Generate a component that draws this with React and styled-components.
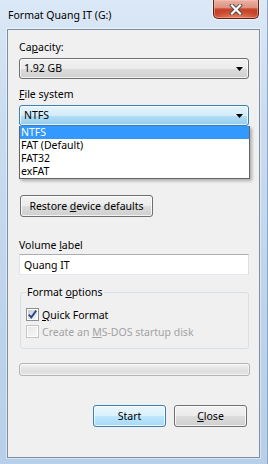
import React from "react";
import styled, { createGlobalStyle } from "styled-components";

const FONT = `"Noto Sans", "Segoe UI", sans-serif`;

const Global = createGlobalStyle`
  html, body { margin: 0; padding: 0; background: #ffffff; }
  #root { width: 268px; height: 464px; }
  u { text-decoration: underline; text-underline-offset: 1px; }
`;

const Window = styled.div`
  width: 268px;
  height: 464px;
  box-sizing: border-box;
  display: flex;
  flex-direction: column;
  overflow: hidden;
  font-family: ${FONT};
  font-size: 10.5px;
  color: #000;
  background: linear-gradient(to bottom, #dbe8f6 0%, #cadcf0 25%, #bdd3eb 70%, #b7cfe8 100%);
  box-shadow: inset -1px 0 0 #8ea6c2;
`;

const TitleBar = styled.div`
  flex: none;
  height: 29px;
  display: flex;
  align-items: flex-start;
  padding-left: 8px;
`;

const Title = styled.div`
  margin-top: 8px;
  line-height: 14px;
  white-space: nowrap;
`;

const CloseBtn = styled.div`
  margin-left: auto;
  margin-right: 9px;
  width: 46px;
  height: 19px;
  box-sizing: border-box;
  border: 1px solid #5b2117;
  border-top: none;
  border-radius: 0 0 5px 5px;
  display: flex;
  align-items: center;
  justify-content: center;
  background:
    radial-gradient(ellipse 60% 45% at 50% 100%, rgba(240, 140, 100, 0.85), rgba(240, 140, 100, 0) 100%),
    linear-gradient(to bottom, #ebb1a3 0%, #df9280 42%, #c8472e 50%, #c13e25 75%, #c84a30 100%);
  box-shadow: 0 0 0 1px rgba(255, 255, 255, 0.5), inset 0 0 0 1px rgba(255, 200, 190, 0.45);
`;

const Client = styled.div`
  flex: none;
  margin: 0 8px 0 7px;
  height: 429px;
  box-sizing: border-box;
  border: 1px solid #7d8ea3;
  background: #f0f0f0;
  padding: 10px 10px 0 11px;
  display: flex;
  flex-direction: column;
  box-shadow: 0 0 0 1px rgba(255, 255, 255, 0.45);
`;

const Label = styled.div`
  height: 14px;
  line-height: 14px;
  white-space: nowrap;
  margin-top: ${(p) => p.$mt || 0}px;
  margin-bottom: ${(p) => (p.$mb === undefined ? 4 : p.$mb)}px;
`;

const Spacer = styled.div`
  flex: none;
  height: ${(p) => p.$h}px;
`;

const ComboWrap = styled.div`
  position: relative;
  z-index: ${(p) => (p.$open ? 5 : 1)};
`;

const Combo = styled.div`
  height: 21px;
  box-sizing: border-box;
  border: 1px solid ${(p) => (p.$open ? "#3c7fb1" : "#707070")};
  border-radius: 3px;
  padding-left: 4px;
  display: flex;
  align-items: center;
  line-height: 19px;
  white-space: nowrap;
  background: ${(p) =>
    p.$open
      ? "linear-gradient(to bottom, #e6f4fc 0%, #d2ecfa 50%, #b5def5 50%, #93ccec 100%)"
      : "linear-gradient(to bottom, #f2f2f2 0%, #ebebeb 50%, #dddddd 50%, #cfcfcf 100%)"};
  box-shadow: inset 0 0 0 1px rgba(255, 255, 255, 0.7);
`;

const Arrow = styled.svg`
  margin-left: auto;
  margin-right: 5px;
  flex: none;
`;

const List = styled.ul`
  position: absolute;
  top: 100%;
  left: 0;
  right: -1px;
  margin: 0;
  padding: 0;
  list-style: none;
  background: #ffffff;
  border: 1px solid #646464;
  border-top: none;
  box-shadow: 2px 2px 3px rgba(0, 0, 0, 0.28);
`;

const Item = styled.li`
  height: 13px;
  line-height: 13px;
  padding-left: 1px;
  white-space: nowrap;
  background: ${(p) => (p.$sel ? "#3399ff" : "transparent")};
  color: ${(p) => (p.$sel ? "#ffffff" : "#000000")};
`;

const Button = styled.button`
  flex: none;
  font: inherit;
  color: #000;
  width: ${(p) => p.$w}px;
  height: 22px;
  box-sizing: border-box;
  padding: 0;
  margin: ${(p) => p.$m || "0"};
  line-height: 18px;
  white-space: nowrap;
  border-radius: 3px;
  border: 1px solid ${(p) => (p.$default ? "#3c7fb1" : "#707070")};
  background: ${(p) =>
    p.$default
      ? "linear-gradient(to bottom, #eaf6fd 0%, #d9f0fc 50%, #bee6fd 50%, #a7d9f5 100%)"
      : "linear-gradient(to bottom, #f2f2f2 0%, #ebebeb 50%, #dddddd 50%, #cfcfcf 100%)"};
  box-shadow: inset 0 0 0 1px rgba(255, 255, 255, 0.75);
  cursor: default;
`;

const TextInput = styled.input`
  font: inherit;
  color: #000;
  height: 21px;
  box-sizing: border-box;
  width: 100%;
  margin: 0;
  padding: 0 0 0 4px;
  background: #ffffff;
  border: 1px solid;
  border-color: #abadb3 #dbdfe6 #e3e9ef #e2e3ea;
  border-radius: 0;
  outline: none;
`;

const Group = styled.fieldset`
  margin: 10px 0 0 1px;
  width: 229px;
  box-sizing: border-box;
  min-inline-size: 0;
  padding: 8px 5px 9px 5px;
  border: 1px solid #d5dfe5;
  border-radius: 3px;
`;

const Legend = styled.legend`
  padding: 0 1px;
  line-height: 14px;
  height: 14px;
  white-space: nowrap;
`;

const CheckRow = styled.div`
  height: 15px;
  display: flex;
  align-items: center;
  gap: 3px;
  white-space: nowrap;
  margin-top: ${(p) => p.$mt || 0}px;
  color: ${(p) => (p.$disabled ? "#a3a3a3" : "#000")};
`;

const Box = styled.span`
  flex: none;
  width: 13px;
  height: 13px;
  box-sizing: border-box;
  border: 1px solid ${(p) => (p.$disabled ? "#c4c4c4" : "#8e8f8f")};
  padding: 1px;
  display: flex;
  align-items: center;
  justify-content: center;
  background: ${(p) =>
    p.$disabled
      ? "linear-gradient(135deg, #e8e8e8, #f7f7f7) content-box, #ffffff"
      : "linear-gradient(135deg, #c9ced5, #f6f7f8) content-box, #ffffff"};
`;

const Progress = styled.div`
  margin-top: 14px;
  height: 13px;
  margin-right: -1px;
  box-sizing: border-box;
  border: 1px solid #b4b4b4;
  border-radius: 3px;
  background: linear-gradient(to bottom, #f4f4f4 0%, #e6e6e6 35%, #dddddd 65%, #e6e6e6 100%);
  box-shadow: inset 0 0 0 1px rgba(255, 255, 255, 0.5);
`;

const ButtonRow = styled.div`
  margin-top: 29px;
  display: flex;
  justify-content: flex-end;
  gap: 8px;
  padding-right: 2px;
`;

const DownArrow = () => (
  <Arrow width="7" height="4" viewBox="0 0 7 4">
    <polygon points="0,0 7,0 3.5,4" fill="#000" />
  </Arrow>
);

const CheckMark = () => (
  <svg width="9" height="9" viewBox="0 0 9 9" style={{ overflow: "visible" }}>
    <path d="M0.8 4.6 L3.3 7.4 L8.2 0.6" fill="none" stroke="#2b4a86" strokeWidth="1.9" strokeLinejoin="miter" />
  </svg>
);

export default function App() {
  return (
    <>
      <Global />
      <Window>
        <TitleBar>
          <Title>Format Quang IT (G:)</Title>
          <CloseBtn>
            <svg width="14" height="11" viewBox="0 0 14 11">
              <path d="M3 1.5 L11 9.5 M11 1.5 L3 9.5" stroke="#4a4a4a" strokeWidth="4" strokeLinecap="square" />
              <path d="M3 1.5 L11 9.5 M11 1.5 L3 9.5" stroke="#ffffff" strokeWidth="2.2" strokeLinecap="square" />
            </svg>
          </CloseBtn>
        </TitleBar>
        <Client>
          <Label>
            Ca<u>p</u>acity:
          </Label>
          <ComboWrap>
            <Combo>
              1.92 GB
              <DownArrow />
            </Combo>
          </ComboWrap>
          <Label $mt={8}>
            <u>F</u>ile system
          </Label>
          <ComboWrap $open>
            <Combo $open>
              NTFS
              <DownArrow />
            </Combo>
            <List>
              <Item $sel>NTFS</Item>
              <Item>FAT (Default)</Item>
              <Item>FAT32</Item>
              <Item>exFAT</Item>
            </List>
          </ComboWrap>
          <Spacer $h={47} />
          <Button $w={133} $m="22px 0 0 1px">
            Restore <u>d</u>evice defaults
          </Button>
          <Label $mt={21} $mb={2}>
            Volume <u>l</u>abel
          </Label>
          <TextInput defaultValue="Quang IT" />
          <Group>
            <Legend>
              Format <u>o</u>ptions
            </Legend>
            <CheckRow>
              <Box>
                <CheckMark />
              </Box>
              <span>
                <u>Q</u>uick Format
              </span>
            </CheckRow>
            <CheckRow $mt={2} $disabled>
              <Box $disabled />
              <span>
                Create an <u>M</u>S-DOS startup disk
              </span>
            </CheckRow>
          </Group>
          <Progress />
          <ButtonRow>
            <Button $w={73} $default>
              Start
            </Button>
            <Button $w={73}>
              <u>C</u>lose
            </Button>
          </ButtonRow>
        </Client>
      </Window>
    </>
  );
}
